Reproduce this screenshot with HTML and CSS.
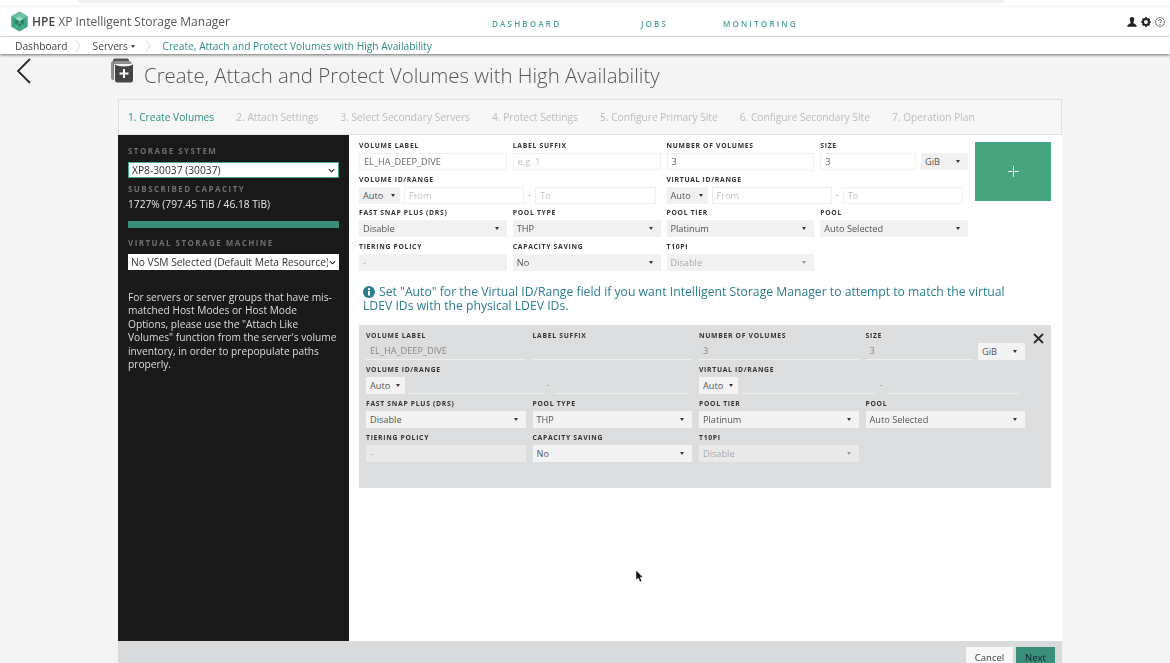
FILE: index.html
```html
<!DOCTYPE html>
<html lang="en">
<head>
<meta charset="utf-8">
<title>HPE XP Intelligent Storage Manager</title>
<link rel="stylesheet" href="styles.css">
</head>
<body>
<div class="page">
  <div class="topstrip"><div class="topstrip-bar"></div></div>
  <header class="navbar">
    <div class="brand">
      <svg class="logo" viewBox="0 0 20 22" width="19" height="21">
        <path d="M10 0.5 18.6 5.5V16.5L10 21.5 1.4 16.5V5.5Z" fill="#3fa585"/>
        <path d="M10 0.5 18.6 5.5 10 10.5 1.4 5.5Z" fill="#6cbfa4"/>
        <path d="M10 5.5 14.5 8V13.5L10 16 5.5 13.5V8Z" fill="#2c7f68"/>
        <path d="M10 5.5 14.5 8 10 10.7 5.5 8Z" fill="#a8dcc9"/>
        <path d="M5 3 15 19M15 3 5 19" stroke="#7fcdb3" stroke-width=".6" fill="none"/>
      </svg>
      <span class="brand-name"><b>HPE</b> XP Intelligent Storage Manager</span>
    </div>
    <nav class="mainnav">
      <a class="nav-dash">DASHBOARD</a>
      <a class="nav-jobs">JOBS</a>
      <a class="nav-mon">MONITORING</a>
    </nav>
    <div class="tools">
      <svg viewBox="0 0 10 10" width="10" height="10"><path d="M5 0C6.700 0 7.400 1.300 7.200 3 7 4.400 6.400 5.200 6.200 5.800 6.300 6.600 8.600 7 9.600 8.400V9.800H.4V8.400C1.400 7 3.700 6.600 3.800 5.800 3.600 5.200 3 4.400 2.800 3 2.600 1.300 3.300 0 5 0Z" fill="#222"/></svg>
      <svg viewBox="0 0 10 10" width="10" height="10"><circle cx="5" cy="5" r="3" fill="none" stroke="#222" stroke-width="2.100"/><path d="M5 .1V1.600M5 8.400V9.900M.1 5H1.600M8.400 5H9.900M1.500 1.500 2.600 2.600M7.400 7.400 8.500 8.500M8.500 1.500 7.400 2.600M2.600 7.400 1.500 8.500" stroke="#222" stroke-width="1.700"/></svg>
      <svg viewBox="0 0 10 10" width="10" height="10"><circle cx="5" cy="5" r="4.400" fill="none" stroke="#444" stroke-width=".7"/><path d="M3.600 3.900C3.600 2 6.500 2.200 6.400 3.900 6.300 5 5 5 5 6.200" fill="none" stroke="#444" stroke-width=".8"/><circle cx="5" cy="7.500" r=".5" fill="#444"/></svg>
    </div>
  </header>
  <div class="crumbs">
    <span class="crumb crumb-dash">Dashboard</span>
    <svg class="sep" viewBox="0 0 6 14" width="6" height="14"><path d="M1 1 5 7 1 13" fill="none" stroke="#ddd"/></svg>
    <span class="crumb crumb-srv">Servers <i class="mini-caret"></i></span>
    <svg class="sep" viewBox="0 0 6 14" width="6" height="14"><path d="M1 1 5 7 1 13" fill="none" stroke="#ddd"/></svg>
    <span class="crumb crumb-active">Create, Attach and Protect Volumes with High Availability</span>
  </div>

  <div class="titlebar">
    <svg class="back" viewBox="0 0 15 26" width="15" height="26"><path d="M14 1 2 13 14 25" fill="none" stroke="#2b2b2b" stroke-width="1.800"/></svg>
    <svg class="title-icon" viewBox="0 0 24 25" width="24" height="25">
      <path d="M3 2.500C3 1 4 .5 5 .5H16C18 .5 19 1 19 2.500V3H6C4.500 3 3.500 4 3.500 5.500V20H3Z" fill="#555"/>
      <path d="M1 5C1 4 2 3 3 3H18C20 3 21 3.500 21.500 5V6H4V22H3C2 22 1 21 1 20Z" fill="#777" opacity=".8"/>
      <path d="M5 6.500C8 9 19 9 23 6.500V22C23 23.500 22 24.500 21 24.500H7C6 24.500 5 23.500 5 22Z" fill="#444"/>
      <path d="M14 11V20M9.500 15.500H18.500" stroke="#fff" stroke-width="2"/>
    </svg>
    <h1 class="title">Create, Attach and Protect Volumes with High Availability</h1>
  </div>

  <section class="wizard">
    <ol class="steps">
      <li class="active">1. Create Volumes</li>
      <li>2. Attach Settings</li>
      <li>3. Select Secondary Servers</li>
      <li>4. Protect Settings</li>
      <li>5. Configure Primary Site</li>
      <li>6. Configure Secondary Site</li>
      <li>7. Operation Plan</li>
    </ol>
    <div class="wizard-body">
      <aside class="sidebar">
        <div class="side-label first">STORAGE SYSTEM</div>
        <div class="side-select focus">XP8-30037 (30037)
          <svg viewBox="0 0 8 5" width="7" height="5"><path d="M1 1 4 4 7 1" fill="none" stroke="#222" stroke-width="1.300"/></svg>
        </div>
        <div class="side-label cap">SUBSCRIBED CAPACITY</div>
        <div class="capacity">1727% (797.45 TiB / 46.18 TiB)</div>
        <div class="capbar"></div>
        <div class="side-label vsm">VIRTUAL STORAGE MACHINE</div>
        <div class="side-select"><span class="clip">No VSM Selected (Default Meta Resource)</span>
          <svg viewBox="0 0 8 5" width="7" height="5"><path d="M1 1 4 4 7 1" fill="none" stroke="#222" stroke-width="1.300"/></svg>
        </div>
        <p class="side-note">For servers or server groups that have mis-matched Host Modes or Host Mode Options, please use the "Attach Like Volumes" function from the server's volume inventory, in order to prepopulate paths properly.</p>
      </aside>
      <main class="content">
        <div class="top-form">
          <div class="fields">
            <div class="field"><label>VOLUME LABEL</label><input class="inp" value="EL_HA_DEEP_DIVE"></div>
            <div class="field"><label>LABEL SUFFIX</label><input class="inp" placeholder="e.g. 1"></div>
            <div class="field"><label>NUMBER OF VOLUMES</label><input class="inp" value="3"></div>
            <div class="field"><label>SIZE</label><div class="pair"><input class="inp" value="3"><div class="sel unit">GiB<i class="caret"></i></div></div></div>

            <div class="field span2"><label>VOLUME ID/RANGE</label><div class="range"><div class="sel auto">Auto<i class="caret"></i></div><input class="inp" placeholder="From"><span class="dash">-</span><input class="inp" placeholder="To"></div></div>
            <div class="field span2"><label>VIRTUAL ID/RANGE</label><div class="range"><div class="sel auto">Auto<i class="caret"></i></div><input class="inp" placeholder="From"><span class="dash">-</span><input class="inp" placeholder="To"></div></div>

            <div class="field"><label>FAST SNAP PLUS (DRS)</label><div class="sel">Disable<i class="caret"></i></div></div>
            <div class="field"><label>POOL TYPE</label><div class="sel">THP<i class="caret"></i></div></div>
            <div class="field"><label>POOL TIER</label><div class="sel">Platinum<i class="caret"></i></div></div>
            <div class="field"><label>POOL</label><div class="sel">Auto Selected<i class="caret"></i></div></div>

            <div class="field"><label>TIERING POLICY</label><div class="sel off">-</div></div>
            <div class="field"><label>CAPACITY SAVING</label><div class="sel">No<i class="caret"></i></div></div>
            <div class="field"><label>T10PI</label><div class="sel off">Disable<i class="caret"></i></div></div>
          </div>
          <button class="add" type="button" aria-label="Add"><svg viewBox="0 0 11 11" width="11" height="11"><path d="M5.500 0V11M0 5.500H11" stroke="#fff" stroke-width=".9"/></svg></button>
        </div>

        <div class="notice">
          <svg viewBox="0 0 12 12" width="12" height="12"><circle cx="6" cy="6" r="6" fill="#2b7d90"/><rect x="5" y="5" width="2" height="4.500" fill="#fff"/><circle cx="6" cy="3.200" r="1.100" fill="#fff"/></svg>
          <p>Set "Auto" for the Virtual ID/Range field if you want Intelligent Storage Manager to attempt to match the virtual LDEV IDs with the physical LDEV IDs.</p>
        </div>

        <div class="volume">
          <svg class="close" viewBox="0 0 11 11" width="11" height="11"><path d="M1 1 10 10M10 1 1 10" stroke="#2a2a2a" stroke-width="1.800"/></svg>
          <div class="fields">
            <div class="field"><label>VOLUME LABEL</label><input class="inp" value="EL_HA_DEEP_DIVE" disabled></div>
            <div class="field"><label>LABEL SUFFIX</label><input class="inp" disabled></div>
            <div class="field"><label>NUMBER OF VOLUMES</label><input class="inp" value="3" disabled></div>
            <div class="field"><label>SIZE</label><div class="pair"><input class="inp" value="3" disabled><div class="sel unit">GiB<i class="caret"></i></div></div></div>

            <div class="field span2"><label>VOLUME ID/RANGE</label><div class="range"><div class="sel auto">Auto<i class="caret"></i></div><input class="inp" disabled><span class="dash">-</span><input class="inp" disabled></div></div>
            <div class="field span2"><label>VIRTUAL ID/RANGE</label><div class="range"><div class="sel auto">Auto<i class="caret"></i></div><input class="inp" disabled><span class="dash">-</span><input class="inp" disabled></div></div>

            <div class="field"><label>FAST SNAP PLUS (DRS)</label><div class="sel">Disable<i class="caret"></i></div></div>
            <div class="field"><label>POOL TYPE</label><div class="sel">THP<i class="caret"></i></div></div>
            <div class="field"><label>POOL TIER</label><div class="sel">Platinum<i class="caret"></i></div></div>
            <div class="field"><label>POOL</label><div class="sel">Auto Selected<i class="caret"></i></div></div>

            <div class="field"><label>TIERING POLICY</label><div class="sel off">-</div></div>
            <div class="field"><label>CAPACITY SAVING</label><div class="sel">No<i class="caret"></i></div></div>
            <div class="field"><label>T10PI</label><div class="sel off">Disable<i class="caret"></i></div></div>
          </div>
        </div>
      </main>
    </div>
    <footer class="actions">
      <button class="btn" type="button">Cancel</button>
      <button class="btn primary" type="button">Next</button>
    </footer>
  </section>
  <svg class="cursor" viewBox="0 0 9 13" width="9" height="13"><path d="M1 0V10L3.300 8 5 12 6.800 11.200 5.200 7.500H8Z" fill="#111" stroke="#fff" stroke-width=".5"/></svg>
</div>
</body>
</html>
```

FILE: styles.css
```css
* { box-sizing: border-box; }
html, body { margin: 0; height: 100%; overflow: hidden; }
body { background: #f4f4f4; font-family: "Open Sans", "Liberation Sans", sans-serif; color: #444; }
.page { position: relative; width: 1170px; height: 663px; overflow: hidden; filter: blur(.55px); }

.topstrip { height: 7px; background: #fff; border-bottom: 1px solid #f0f0f0; padding: 0 165px 0 78px; }
.topstrip-bar { height: 3px; background: #eef0f3; border-radius: 0 0 6px 6px; }

.navbar { position: relative; display: flex; align-items: center; height: 30px; background: #fff; border-bottom: 1px solid #eee; padding: 0 5px 0 10px; }
.brand { display: flex; align-items: center; width: 482px; }
.logo { margin-right: 3px; }
.brand-name { font-size: 12px; color: #555; white-space: nowrap; }
.brand-name b { font-weight: 600; color: #444; }
.mainnav { display: flex; font-size: 8px; font-weight: 600; letter-spacing: 2.200px; color: #4fa196; margin-top: 3px; }
.nav-dash { width: 149px; }
.nav-jobs { width: 82px; }
.tools { display: flex; gap: 4px; margin-left: auto; }

.crumbs { position: relative; display: flex; align-items: center; height: 17px; background: #fff; padding-left: 15px; font-size: 10.200px; color: #444; box-shadow: 0 1px 3px rgba(0,0,0,.55); z-index: 2; }
.sep { margin: 0 12px 0 7px; }
.crumb-srv { margin-right: 3px; }
.crumb-active { color: #2f8b85; }
.mini-caret { display: inline-block; border: 2.500px solid transparent; border-top: 3px solid #444; border-bottom: 0; vertical-align: middle; }

.titlebar { display: flex; align-items: flex-start; height: 45px; padding: 4px 0 0 16px; }
.back { flex: none; }
.title-icon { flex: none; margin-left: 79px; }
.title { margin: 3px 0 0 10px; font-size: 20.400px; line-height: 28px; font-weight: 300; color: #555; white-space: nowrap; }

.wizard { width: 944px; margin-left: 118px; }
.steps { display: flex; gap: 22.100px; list-style: none; margin: 0; height: 36px; padding: 0 0 0 9px; align-items: center; background: #f6f6f6; border: 1px solid #dedede; font-size: 10.200px; color: #bdbdbd; }
.steps li { white-space: nowrap; }
.steps .active { color: #2f8f80; }

.wizard-body { display: flex; height: 506px; }
.sidebar { width: 231px; flex: none; background: #1a1a1a; padding: 0 10px; }
.side-label { font-size: 8px; line-height: 10px; font-weight: 700; letter-spacing: 1.450px; color: #6f6f6f; white-space: nowrap; }
.side-label.first { margin-top: 11px; }
.side-label.cap { margin-top: 6px; }
.side-label.vsm { margin-top: 10px; }
.side-select { display: flex; align-items: center; justify-content: space-between; height: 16px; margin-top: 6px; padding: 0 3px; background: #fff; font-size: 10.250px; color: #333; }
.side-select.focus { border: 1px solid #4ba890; height: 16px; }
.clip { overflow: hidden; white-space: nowrap; width: 197px; }
.capacity { margin-top: 3px; font-size: 10.200px; line-height: 14px; color: #e6e6e6; white-space: nowrap; }
.capbar { height: 7px; margin-top: 10px; background: #3b8f78; }
.side-note { margin: 21px 0 0; font-size: 10.200px; line-height: 13.400px; color: #dcdcdc; }

.content { flex: 1; background: #fff; padding: 6px 11px 0 10px; }
.top-form { display: flex; gap: 7px; }
.fields { display: grid; grid-template-columns: repeat(4, 1fr); column-gap: 6px; row-gap: 4.600px; width: 609px; flex: none; align-content: start; }
.field { min-width: 0; }
.span2 { grid-column: span 2; }
.field label { display: block; height: 12px; font-size: 6.800px; line-height: 9px; font-weight: 700; letter-spacing: .7px; color: #333; white-space: nowrap; }
.inp { display: block; width: 100%; min-width: 0; height: 17px; padding: 0 4px; margin: 0; border: 1px solid #f0f0f0; background: #fff; font: inherit; font-size: 9.200px; color: #666; outline: 0; }
.inp::placeholder { color: #c0c0c0; opacity: 1; }
.sel { position: relative; display: flex; align-items: center; height: 17px; padding: 0 4px; background: #f1f1f1; font-size: 9.200px; color: #555; }
.caret { position: absolute; right: 8px; top: 7px; border: 2.500px solid transparent; border-top: 3px solid #333; border-bottom: 0; }
.off { color: #aaa; }
.off .caret { border-top-color: #999; }
.pair { display: flex; gap: 5px; }
.pair .inp { flex: 1; }
.unit { width: 47px; flex: none; }
.range { display: flex; align-items: center; padding-right: 5px; }
.auto { width: 41px; flex: none; margin-right: 4px; }
.auto .caret { right: 5px; }
.range .inp { flex: 1; }
.dash { width: 11px; flex: none; text-align: center; font-size: 8.600px; color: #999; }

.add { flex: none; width: 76px; height: 59px; padding: 0; margin-top: 1px; background: #46a57f; border: 0; display: flex; align-items: center; justify-content: center; }

.notice { display: flex; align-items: flex-start; gap: 4px; margin: 14px 40px 0 4px; color: #2b7d90; font-size: 12.200px; line-height: 14px; }
.notice svg { flex: none; margin-top: 1px; }
.notice p { margin: 0 0 0 -16px; text-indent: 16px; }

.volume { position: relative; width: 692px; height: 163px; margin-top: 12px; padding: 6px 26px 0 7px; background: #dcddde; }
.volume .fields { width: 659px; column-gap: 7px; row-gap: 5px; }
.volume .inp { background: transparent; border: 0; border-bottom: 1px solid #eceded; color: #888; }
.volume .sel { background: #f3f3f3; }
.volume .sel.off { background: #e9e9ea; }
.volume .auto { width: 39px; }
.close { position: absolute; top: 8px; right: 7px; }

.actions { display: flex; justify-content: flex-end; gap: 3px; height: 22px; padding: 6px 7px 0 0; background: #d9dadb; }
.btn { width: 47px; height: 22px; padding: 0 0 2px; border: 0; background: #f7f7f7; font: inherit; font-size: 9.500px; color: #444; }
.primary { width: 39px; background: #3a8f78; color: #123; }

.cursor { position: absolute; left: 635px; top: 570px; }
```
